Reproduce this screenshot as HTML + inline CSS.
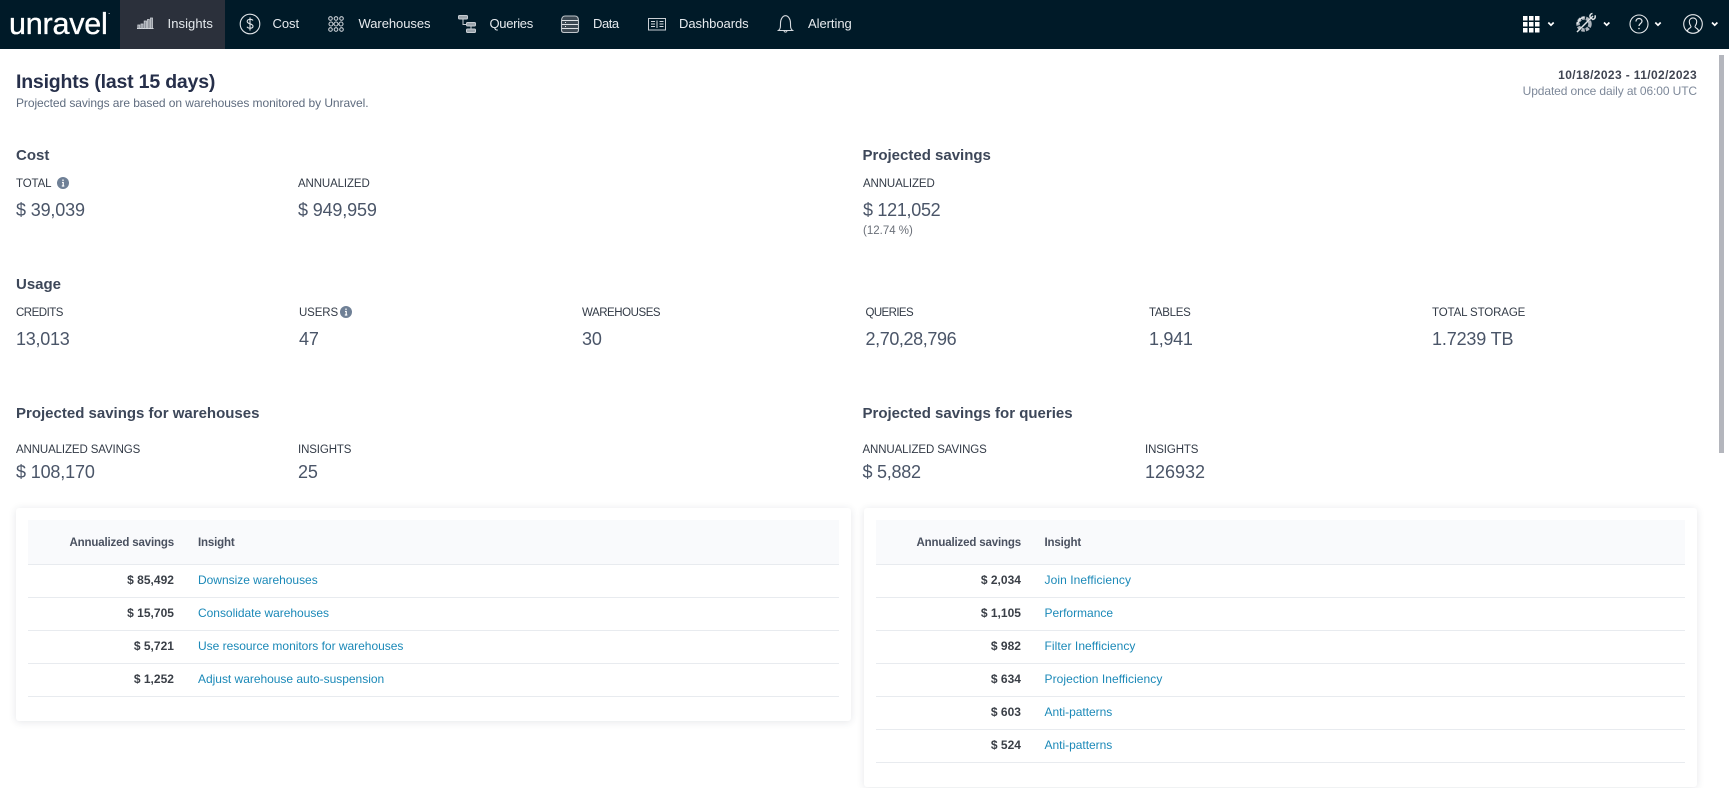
<!DOCTYPE html>
<html><head><meta charset="utf-8"><style>
html,body{margin:0;padding:0;width:1729px;height:788px;overflow:hidden;background:#fff;font-family:"Liberation Sans",Arial,sans-serif}
.t{position:absolute;white-space:nowrap;line-height:16px;height:16px}
.nav{position:absolute;left:0;top:0;width:1729px;height:49px;background:#001a28}
.n{color:#e6eaee;font-size:13px;letter-spacing:-.05px;top:15.5px}
.h{font-size:15px;font-weight:bold;color:#3d4759}
.l{font-size:11.5px;color:#333b47;letter-spacing:-.12px}
.v{font-size:18px;color:#4a5568;letter-spacing:-.15px}
.card{position:absolute;background:#fff;border-radius:3px;box-shadow:0 1px 8px rgba(40,50,70,.12)}
.hd{position:absolute;background:#f9fafc}
.ln{position:absolute;height:1px;background:#e8ebef}
.th{font-size:11.5px;font-weight:bold;color:#4a5160;letter-spacing:-.16px}
.a{font-size:12px;font-weight:bold;color:#3a3f47;letter-spacing:.02px}
.k{font-size:12px;color:#1b89b8;letter-spacing:-.02px}
svg{position:absolute;overflow:visible}
</style></head><body>
<div class="nav"></div>
<div style="position:absolute;left:120px;top:0;width:105px;height:49px;background:#2b303b"></div>
<div class="t" style="left:9px;top:8px;height:32px;line-height:32px;font-size:30.5px;color:#fff;letter-spacing:-.2px;-webkit-text-stroke:.35px #fff">unravel</div>
<div class="t n" style="left:167.5px;letter-spacing:.08px">Insights</div>
<div class="t n" style="left:272.5px">Cost</div>
<div class="t n" style="left:358.5px">Warehouses</div>
<div class="t n" style="left:489.5px;letter-spacing:-.3px">Queries</div>
<div class="t n" style="left:593px;letter-spacing:-.45px">Data</div>
<div class="t n" style="left:679px">Dashboards</div>
<div class="t n" style="left:808px">Alerting</div>

<svg style="left:0;top:0" width="1729" height="49" fill="none" stroke="#cfd5da" stroke-width="1">
<!-- logo mark -->
<path d="M108.500 13.500h1.500" stroke="#aab2b9" stroke-width=".8"/>
<!-- insights -->
<path d="M137 28.500h16.500" stroke="#e2e5e8"/>
<g fill="#8d929b" stroke="#cfd3d8" stroke-width=".8"><rect x="137.800" y="25" width="2" height="3.500"/><rect x="141" y="24" width="2" height="4.500"/><rect x="144.200" y="21" width="2.300" height="7.500"/><rect x="147.500" y="19.500" width="1.800" height="9"/><rect x="150.500" y="18" width="2" height="10.500"/></g>
<!-- cost -->
<circle cx="250" cy="24" r="9.800" stroke="#e0e4e8" stroke-width="1.100"/>
<path d="M253 20.500c-1-1.500-5.500-1.800-5.800.8-.3 3 6 2 5.800 5-.2 2.500-5 2.300-6 .4M250 17.500v13" stroke="#e0e4e8" stroke-width="1.100"/>
<!-- warehouses -->
<g stroke="#c6ccd2" stroke-width="1.100"><circle cx="330.500" cy="18.500" r="1.800"/><circle cx="336" cy="18.500" r="1.800"/><circle cx="341.500" cy="18.500" r="1.800"/><circle cx="330.500" cy="29.500" r="1.800"/><circle cx="336" cy="29.500" r="1.800"/><circle cx="341.500" cy="29.500" r="1.800"/><circle cx="331" cy="24" r="2"/><circle cx="341" cy="24" r="2"/><circle cx="336" cy="24" r="2"/></g>
<!-- queries -->
<g fill="#9aa3ab" stroke="#c6ccd2"><rect x="458.500" y="15.500" width="9" height="3.500" rx="1"/><rect x="466.500" y="22.500" width="9" height="3.500" rx="1"/><rect x="466.500" y="29" width="9" height="3.500" rx="1"/></g>
<path d="M463 19v5.500h3.500M471 26v3" stroke="#c6ccd2"/>
<!-- data -->
<path d="M561.500 21c0-3.500 1.500-5 3.500-5h10c2 0 3.500 1.500 3.500 5v9c0 1.500-1 2.500-2.500 2.500h-12c-1.500 0-2.500-1-2.500-2.500z" fill="#3c4953" stroke="#c0c6cb" stroke-width="1.100"/>
<path d="M562 20.500h16M562 24.500h16M562 28.500h16" stroke="#dfe3e6" stroke-width="1.100"/><path d="M565 22.500h1M565 26.500h1" stroke="#dfe3e6"/>
<!-- dashboards -->
<rect x="648.500" y="18.500" width="17" height="11.500" stroke="#c9ced3"/>
<path d="M651 21.500h4M651 24h4M651 26.500h4M657 20.500v7.500M659.500 21.500h4M659.500 24h4M659.500 26.500h4" stroke="#d5d9de"/>
<!-- bell -->
<path d="M778.500 30.500c2-1.500 2-3.500 2-7.500 0-3.800 2.200-7.300 5-7.300s5 3.500 5 7.300c0 4 0 6 2 7.500z" stroke="#d5d9de" stroke-width="1.100"/><path d="M784 31c.5 1.500 2.500 1.500 3 0" stroke="#d5d9de"/>
<!-- grid -->
<g fill="#fff" stroke="none"><rect x="1523" y="16" width="4.500" height="4.500"/><rect x="1529" y="16" width="4.500" height="4.500"/><rect x="1535" y="16" width="4.500" height="4.500"/><rect x="1523" y="22" width="4.500" height="4.500"/><rect x="1529" y="22" width="4.500" height="4.500"/><rect x="1535" y="22" width="4.500" height="4.500"/><rect x="1523" y="28" width="4.500" height="4.500"/><rect x="1529" y="28" width="4.500" height="4.500"/><rect x="1535" y="28" width="4.500" height="4.500"/></g>
<!-- wrench/gear -->
<circle cx="1584" cy="24" r="6" stroke="#aeb5bc" stroke-width="3.500" stroke-dasharray="3.300 1"/>
<path d="M1577 32l16-16M1592.500 13.500c-1.500 0-3 1.500-2.500 3.500l2.800 2.500c1.800-.3 3-2 2.200-4.300M1577 24l3-5 4-2" stroke="#dfe3e6" stroke-width="1.500"/>
<!-- help -->
<circle cx="1639" cy="24" r="9" stroke="#e6e9ec" stroke-width="1.100"/>
<path d="M1636 21.500c0-4 6-4 6 -.2 0 2.200-3 2.200-3 4.700" stroke="#e6e9ec" stroke-width="1.200"/><circle cx="1639" cy="28.500" r=".8" fill="#e6e9ec" stroke="none"/>
<!-- user -->
<circle cx="1693" cy="24" r="9.300" stroke="#e6e9ec" stroke-width="1.100"/>
<path d="M1687.500 31.200c0-3 3.500-3 3.500-4.500 0-1-1.700-2-1.700-5 0-5 7.400-5 7.400 0 0 3-1.700 4-1.700 5 0 1.500 3.500 1.500 3.500 4.500" stroke="#e6e9ec" stroke-width="1.100"/>
<!-- chevrons -->
<g stroke="#fff" stroke-width="1.700"><path d="M1548.300 22.500l2.700 2.700 2.700-2.700M1604 22.500l2.700 2.700 2.700-2.700M1655.300 22.500l2.700 2.700 2.700-2.700M1712 22.500l2.700 2.700 2.700-2.700"/></g>
</svg>

<div style="position:absolute;left:1719px;top:55px;width:4.500px;height:398px;background:#b4b6bd"></div>

<div class="t" style="left:16px;top:72px;height:20px;line-height:20px;font-size:19.500px;letter-spacing:-.2px;font-weight:bold;color:#262f4a">Insights (last 15 days)</div>
<div class="t" style="left:16px;top:94.500px;font-size:12px;letter-spacing:-.07px;color:#5f6c7f">Projected savings are based on warehouses monitored by Unravel.</div>
<div class="t" style="right:32px;top:67px;font-size:12px;letter-spacing:.38px;font-weight:bold;color:#404552">10/18/2023 - 11/02/2023</div>
<div class="t" style="right:32px;top:82.500px;font-size:12px;letter-spacing:-.1px;color:#7d8899">Updated once daily at 06:00 UTC</div>

<div class="t h" style="left:16px;top:147.500px">Cost</div>
<div class="t l" style="left:16px;top:176px">TOTAL</div>
<svg style="left:57px;top:177px" width="12" height="12"><circle cx="6" cy="6" r="6" fill="#6f8096"/><path d="M6 2.500v1.500M5 5.500h1.200v3.500M4.800 9h2.500" stroke="#fff" stroke-width="1.300"/></svg>
<div class="t l" style="left:298px;top:176px">ANNUALIZED</div>
<div class="t v" style="left:16px;top:202px">$ 39,039</div>
<div class="t v" style="left:298px;top:202px">$ 949,959</div>
<div class="t h" style="left:862.500px;top:147.500px">Projected savings</div>
<div class="t l" style="left:863px;top:176px">ANNUALIZED</div>
<div class="t v" style="left:863px;top:202px;letter-spacing:-.3px">$ 121,052</div>
<div class="t" style="left:863px;top:223px;font-size:11.500px;color:#6a6f78">(12.74 %)</div>

<div class="t h" style="left:16px;top:276.500px">Usage</div>
<div class="t l" style="left:16px;top:305px;letter-spacing:-.5px">CREDITS</div>
<div class="t l" style="left:299px;top:305px">USERS</div>
<svg style="left:340px;top:306px" width="12" height="12"><circle cx="6" cy="6" r="6" fill="#6f8096"/><path d="M6 2.500v1.500M5 5.500h1.200v3.500M4.800 9h2.500" stroke="#fff" stroke-width="1.300"/></svg>
<div class="t l" style="left:582px;top:305px;letter-spacing:-.45px">WAREHOUSES</div>
<div class="t l" style="left:865.500px;top:305px;letter-spacing:-.6px">QUERIES</div>
<div class="t l" style="left:1149px;top:305px;letter-spacing:-.3px">TABLES</div>
<div class="t l" style="left:1432px;top:305px">TOTAL STORAGE</div>
<div class="t v" style="left:16px;top:331px;letter-spacing:-.25px">13,013</div>
<div class="t v" style="left:299px;top:331px">47</div>
<div class="t v" style="left:582px;top:331px">30</div>
<div class="t v" style="left:865.500px;top:331px;letter-spacing:-.4px">2,70,28,796</div>
<div class="t v" style="left:1149px;top:331px;letter-spacing:-.3px">1,941</div>
<div class="t v" style="left:1432px;top:331px">1.7239 TB</div>

<div class="t h" style="left:16px;top:405.500px">Projected savings for warehouses</div>
<div class="t h" style="left:862.500px;top:405.500px">Projected savings for queries</div>
<div class="t l" style="left:16px;top:442px">ANNUALIZED SAVINGS</div>
<div class="t l" style="left:298px;top:442px">INSIGHTS</div>
<div class="t l" style="left:862.500px;top:442px">ANNUALIZED SAVINGS</div>
<div class="t l" style="left:1145px;top:442px">INSIGHTS</div>
<div class="t v" style="left:16px;top:464px">$ 108,170</div>
<div class="t v" style="left:298px;top:464px">25</div>
<div class="t v" style="left:862.500px;top:464px;letter-spacing:-.25px">$ 5,882</div>
<div class="t v" style="left:1145px;top:464px;letter-spacing:0">126932</div>

<div class="card" style="left:16px;top:508px;width:835px;height:213px"></div>
<div class="hd" style="left:28px;top:520px;width:811px;height:44px"></div>
<div class="ln" style="left:28px;top:564px;width:811px"></div>
<div class="ln" style="left:28px;top:597px;width:811px"></div>
<div class="ln" style="left:28px;top:630px;width:811px"></div>
<div class="ln" style="left:28px;top:663px;width:811px"></div>
<div class="ln" style="left:28px;top:696px;width:811px"></div>
<div class="t th" style="right:1555px;top:535px">Annualized savings</div>
<div class="t th" style="left:198px;top:535px">Insight</div>
<div class="t a" style="right:1555px;top:572px">$ 85,492</div><div class="t k" style="left:198px;top:572px">Downsize warehouses</div>
<div class="t a" style="right:1555px;top:605px">$ 15,705</div><div class="t k" style="left:198px;top:605px">Consolidate warehouses</div>
<div class="t a" style="right:1555px;top:638px">$ 5,721</div><div class="t k" style="left:198px;top:638px">Use resource monitors for warehouses</div>
<div class="t a" style="right:1555px;top:671px">$ 1,252</div><div class="t k" style="left:198px;top:671px">Adjust warehouse auto-suspension</div>

<div class="card" style="left:863.500px;top:508px;width:833.500px;height:279px"></div>
<div class="hd" style="left:875.500px;top:520px;width:809.500px;height:44px"></div>
<div class="ln" style="left:875.500px;top:564px;width:809.500px"></div>
<div class="ln" style="left:875.500px;top:597px;width:809.500px"></div>
<div class="ln" style="left:875.500px;top:630px;width:809.500px"></div>
<div class="ln" style="left:875.500px;top:663px;width:809.500px"></div>
<div class="ln" style="left:875.500px;top:696px;width:809.500px"></div>
<div class="ln" style="left:875.500px;top:729px;width:809.500px"></div>
<div class="ln" style="left:875.500px;top:762px;width:809.500px"></div>
<div class="t th" style="right:708px;top:535px">Annualized savings</div>
<div class="t th" style="left:1044.500px;top:535px">Insight</div>
<div class="t a" style="right:708px;top:572px">$ 2,034</div><div class="t k" style="left:1044.500px;top:572px;letter-spacing:.08px">Join Inefficiency</div>
<div class="t a" style="right:708px;top:605px">$ 1,105</div><div class="t k" style="left:1044.500px;top:605px">Performance</div>
<div class="t a" style="right:708px;top:638px">$ 982</div><div class="t k" style="left:1044.500px;top:638px;letter-spacing:.06px">Filter Inefficiency</div>
<div class="t a" style="right:708px;top:671px">$ 634</div><div class="t k" style="left:1044.500px;top:671px;letter-spacing:.06px">Projection Inefficiency</div>
<div class="t a" style="right:708px;top:704px">$ 603</div><div class="t k" style="left:1044.500px;top:704px">Anti-patterns</div>
<div class="t a" style="right:708px;top:737px">$ 524</div><div class="t k" style="left:1044.500px;top:737px">Anti-patterns</div>
</body></html>
